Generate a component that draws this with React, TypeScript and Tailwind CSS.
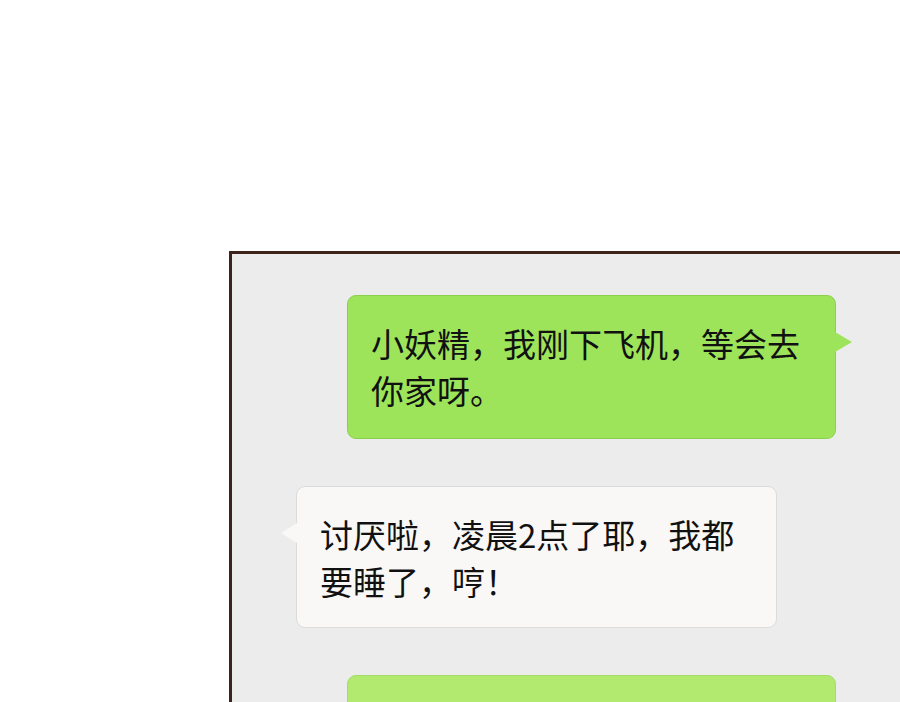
import React from "react";

type Side = "left" | "right";

const font = {
  fontFamily: '"Noto Sans CJK SC", "Noto Sans", sans-serif',
};

const Bubble = ({
  side,
  lines,
  tone,
}: {
  side: Side;
  lines: string[];
  tone: "green" | "white";
}) => {
  const body =
    tone === "green"
      ? "bg-[#9de45a] border-[#8ccf4c]"
      : "bg-[#f9f8f6] border-[#dcdcdc]";
  const pad = tone === "green" ? "pb-[24px]" : "pb-[22px]";
  return (
    <div className={`relative rounded-[9px] border ${body}`}>
      {/* little pointer on the speaker's side */}
      {side === "right" ? (
        <div className="absolute right-[-17px] top-[36px] h-0 w-0 border-y-[10px] border-l-[17px] border-y-transparent border-l-[#9de45a]" />
      ) : (
        <div className="absolute left-[-16px] top-[36px] h-0 w-0 border-y-[10px] border-r-[16px] border-y-transparent border-r-[#f9f8f6]" />
      )}
      <div className={`relative px-[23px] pt-[24px] text-[33px] leading-[47px] text-[#111] ${pad}`}>
        {lines.map((l) => (
          <div key={l}>{l}</div>
        ))}
      </div>
    </div>
  );
};

export default function App() {
  return (
    <div className="h-[702px] w-[900px] overflow-hidden bg-white" style={font}>
      <div className="ml-[229px] mt-[251px] h-[451px] border-l-[3px] border-t-[3px] border-[#3d2319] bg-[#ececec]">
        <div className="flex flex-col gap-[47px] pt-[41px]">
          <div className="ml-[115px] w-[489px]">
            <Bubble
              side="right"
              tone="green"
              lines={["小妖精，我刚下飞机，等会去", "你家呀。"]}
            />
          </div>
          <div className="ml-[64px] w-[481px]">
            <Bubble
              side="left"
              tone="white"
              lines={["讨厌啦，凌晨2点了耶，我都", "要睡了，哼！"]}
            />
          </div>
          <div className="ml-[115px] h-[80px] w-[489px] rounded-t-[9px] border border-[#a5dc63] bg-[#b2e96f]" />
        </div>
      </div>
    </div>
  );
}
